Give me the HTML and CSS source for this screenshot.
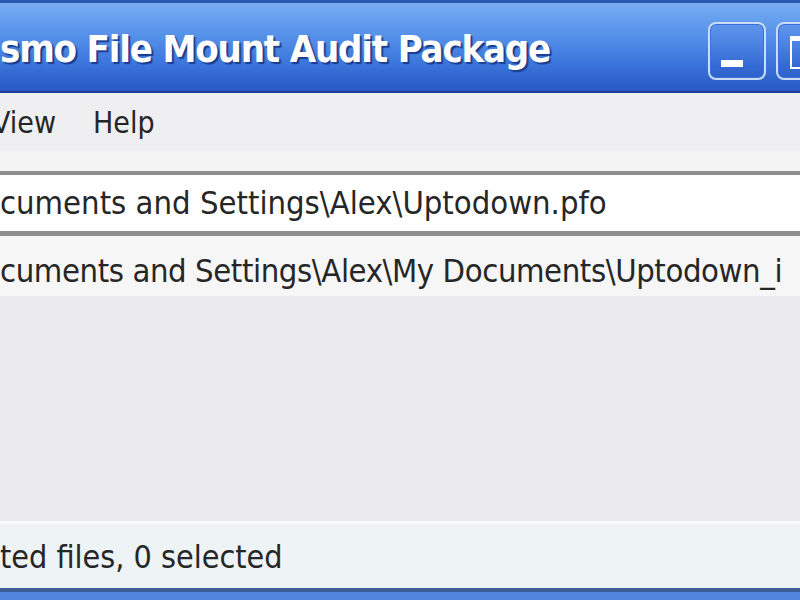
FILE: index.html
```html
<!DOCTYPE html>
<html>
<head>
<meta charset="utf-8">
<link rel="stylesheet" href="styles.css">
</head>
<body>
<div class="window">
  <div class="titlebar">
    <div class="title">smo File Mount Audit Package</div>
    <div class="controls">
      <div class="btn"><span class="min-glyph"></span></div>
      <div class="btn"><span class="max-glyph"></span></div>
    </div>
  </div>
  <div class="menubar">
    <span class="menu-item m-view">View</span>
    <span class="menu-item">Help</span>
  </div>
  <div class="toolband"></div>
  <div class="field field-first">cuments and Settings\Alex\Uptodown.pfo</div>
  <div class="field field-second">cuments and Settings\Alex\My Documents\Uptodown_i</div>
  <div class="body"></div>
  <div class="statusbar">ted files, 0 selected</div>
  <div class="frame-bottom"></div>
</div>
</body>
</html>
```

FILE: styles.css
```css
html, body {
  margin: 0;
  padding: 0;
  width: 800px;
  height: 600px;
  overflow: hidden;
  background: #ecebee;
}
.window {
  display: flex;
  flex-direction: column;
  width: 800px;
  height: 600px;
  font-family: "DejaVu Sans Condensed", "DejaVu Sans", sans-serif;
  color: #262626;
}
.titlebar {
  height: 88px;
  flex: none;
  display: flex;
  align-items: center;
  border-top: 3px solid #2a56b4;
  border-bottom: 2px solid #1d3f98;
  background: linear-gradient(to bottom, #7aaef2 0%, #66a0ee 18%, #4f8ae6 45%, #3b74da 70%, #2c5fca 92%, #2a5ac4 100%);
}
.title {
  flex: 1;
  color: #ffffff;
  font-family: "DejaVu Sans Condensed", "DejaVu Sans", sans-serif;
  font-weight: bold;
  font-size: 38px;
  letter-spacing: -1.2px;
  text-shadow: 2px 2px 1px #1a3c8e;
  margin-top: 4px;
  white-space: nowrap;
}
.controls {
  display: flex;
  gap: 10px;
  margin-right: -34px;
  margin-top: 8px;
}
.btn {
  position: relative;
  width: 54px;
  height: 54px;
  border: 2px solid #c9dcf8;
  border-radius: 8px;
  background: linear-gradient(to bottom, #5f95ea 0%, #4a82e2 40%, #3368d4 80%, #2e62cc 100%);
  box-shadow: inset 0 0 0 1px #3a6fd6;
}
.min-glyph {
  position: absolute;
  left: 11px;
  top: 36px;
  width: 22px;
  height: 7px;
  background: #ffffff;
}
.max-glyph {
  position: absolute;
  left: 12px;
  top: 12px;
  width: 26px;
  height: 26px;
  border: 2px solid #ffffff;
  border-top-width: 5px;
}
.menubar {
  height: 58px;
  flex: none;
  display: flex;
  align-items: center;
  gap: 37px;
  background: #efeef0;
  font-size: 30px;
}
.m-view {
  margin-left: -8px;
}
.toolband {
  height: 20px;
  flex: none;
  background: #f4f4f4;
}
.field {
  flex: none;
  height: 56px;
  line-height: 56px;
  font-size: 32.5px;
  white-space: nowrap;
  overflow: hidden;
}
.field-first {
  border-top: 4px solid #8e8e8e;
  background: #ffffff;
}
.field-second {
  height: 50px;
  padding-top: 6px;
  line-height: 58px;
  letter-spacing: -0.4px;
  border-top: 5px solid #8e8e8e;
  border-bottom: 4px solid #f7f7f7;
  background: #f6f6f6;
}
.body {
  flex: 1;
  background: #ebeaed;
}
.statusbar {
  flex: none;
  height: 64px;
  line-height: 66px;
  border-top: 3px solid #f8fafc;
  background: #eef3f6;
  font-size: 32px;
  white-space: nowrap;
}
.frame-bottom {
  flex: none;
  height: 8px;
  border-top: 4px solid #3d5d96;
  background: #5286dc;
}
```
